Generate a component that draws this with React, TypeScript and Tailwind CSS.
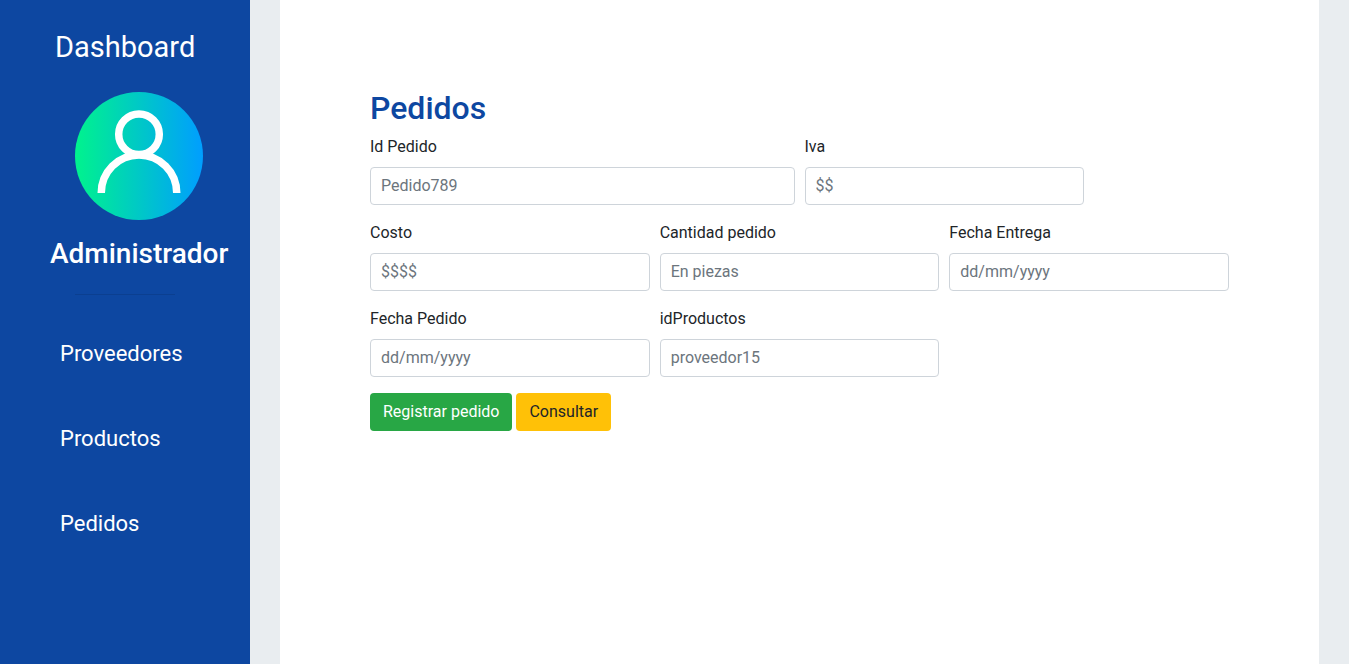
import React from "react";

type FieldProps = { label: string; placeholder: string; className: string };

function Field({ label, placeholder, className }: FieldProps) {
  return (
    <label className={`mb-4 block px-[5px] ${className}`}>
      <span className="mb-2 block">{label}</span>
      <input
        type="text"
        placeholder={placeholder}
        className="block h-[38px] w-full rounded border border-[#ced4da] bg-white px-[10px] pt-[5px] pb-[7px] text-[#495057] outline-none placeholder:text-[#6c757d]"
      />
    </label>
  );
}

function Avatar() {
  return (
    <svg viewBox="0 0 128 128" className="block size-32">
      <defs>
        <linearGradient id="avatar" x1="0" x2="1" y1="0" y2="0">
          <stop offset="0" stopColor="#00f38d" />
          <stop offset="1" stopColor="#009eff" />
        </linearGradient>
      </defs>
      <circle cx="64" cy="64" r="64" fill="url(#avatar)" />
      <g fill="none" stroke="#fff" strokeWidth="7.5">
        <circle cx="64" cy="42.3" r="20.3" />
        <path d="M26.25 101A37.75 38.1 0 0 1 101.750 101" />
      </g>
    </svg>
  );
}

export default function App() {
  return (
    <div className="flex h-[664px] overflow-hidden bg-[#e9edf0] font-[Roboto,sans-serif] text-base leading-6 text-[#212529]">
      <aside className="w-[250px] shrink-0 bg-[#0d47a1] text-white">
        <div className="pt-[26px] pl-[55px] text-[29px] leading-[43px]">Dashboard</div>
        <div className="mt-[23px] pl-[75px]">
          <Avatar />
        </div>
        <h3 className="mt-[17px] pl-[50px] text-[28px] leading-[34px] font-medium">Administrador</h3>
        <hr className="mt-[23px] ml-[75px] w-[100px] border-t border-black/10" />
        <nav className="mt-[39px] flex flex-col gap-[45px] pl-[60px] text-[22px] leading-10">
          <a href="#proveedores">Proveedores</a>
          <a href="#productos">Productos</a>
          <a href="#pedidos">Pedidos</a>
        </nav>
      </aside>
      <main className="mr-[30px] ml-[30px] flex-1 bg-white px-[90px] pt-[89px]">
        <h2 className="mb-2 text-[32px] leading-[38px] font-medium text-[#0d47a1]">Pedidos</h2>
        <form>
          <div className="-mx-[5px] flex">
            <Field label="Id Pedido" placeholder="Pedido789" className="w-1/2" />
            <Field label="Iva" placeholder="$$" className="w-1/3" />
          </div>
          <div className="-mx-[5px] flex">
            <Field label="Costo" placeholder="$$$$" className="w-1/3" />
            <Field label="Cantidad pedido" placeholder="En piezas" className="w-1/3" />
            <Field label="Fecha Entrega" placeholder="dd/mm/yyyy" className="w-1/3" />
          </div>
          <div className="-mx-[5px] flex">
            <Field label="Fecha Pedido" placeholder="dd/mm/yyyy" className="w-1/3" />
            <Field label="idProductos" placeholder="proveedor15" className="w-1/3" />
          </div>
          <div className="flex gap-1">
            <button type="button" className="h-[38px] rounded bg-[#28a745] px-[13px] text-white">Registrar pedido</button>
            <button type="button" className="h-[38px] rounded bg-[#ffc107] px-[13px]">Consultar</button>
          </div>
        </form>
      </main>
    </div>
  );
}
